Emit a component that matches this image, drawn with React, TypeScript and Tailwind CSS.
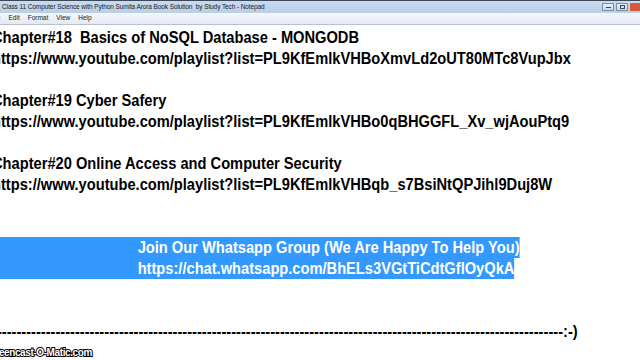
export default function App() {
  return (
    <div className="relative w-[640px] h-[360px] overflow-hidden bg-white" style={{ fontFamily: '"Liberation Sans", Arial, sans-serif' }}>
      {/* title bar */}
      <div className="h-[13px] border-t border-[#3a4a5a] bg-gradient-to-b from-[#c9dbee] to-[#b9cfe6] flex items-center justify-between">
        <div className="text-[6.5px] tracking-[-0.1px] leading-none text-[#1a1a1a] pl-[2px] whitespace-pre">Class 11 Computer Science with Python Sumita Arora Book Solution  by Study Tech - Notepad</div>
        <div className="flex items-center gap-[2px]">
          <div className="w-[12px] h-[8px] border border-[#7a8ea5] bg-gradient-to-b from-[#e6eef7] to-[#c6d4e4] flex items-center justify-center">
            <div className="w-[5px] h-[1px] bg-[#404a55]" />
          </div>
          <div className="w-[12px] h-[8px] border border-[#7a8ea5] bg-gradient-to-b from-[#e6eef7] to-[#c6d4e4] flex items-center justify-center">
            <div className="w-[5px] h-[4px] border border-[#404a55]" />
          </div>
          <div className="w-[10px] h-[8px] bg-[#d8583c] rounded-l-[1px]" />
        </div>
      </div>
      {/* menu bar */}
      <div className="h-[12px] bg-gradient-to-b from-[#f4f7fb] to-[#e4eaf2] border-b border-[#b8c2cc] flex items-center text-[6.5px] leading-none text-[#1a1a1a] ml-[-10px] gap-[8px]">
        <span>File</span>
        <span>Edit</span>
        <span>Format</span>
        <span>View</span>
        <span>Help</span>
      </div>
      {/* text */}
      <div className="pt-[2px] ml-[-8px] origin-top-left scale-x-[0.916] text-[16px] font-bold text-black leading-[21px] whitespace-pre">
        <div>Chapter#18  Basics of NoSQL Database - MONGODB</div>
        <div>https://www.youtube.com/playlist?list=PL9KfEmlkVHBoXmvLd2oUT80MTc8VupJbx</div>
        <div>&nbsp;</div>
        <div>Chapter#19 Cyber Safery</div>
        <div>https://www.youtube.com/playlist?list=PL9KfEmlkVHBo0qBHGGFL_Xv_wjAouPtq9</div>
        <div>&nbsp;</div>
        <div>Chapter#20 Online Access and Computer Security</div>
        <div>https://www.youtube.com/playlist?list=PL9KfEmlkVHBqb_s7BsiNtQPJihl9Duj8W</div>
        <div>&nbsp;</div>
        <div>&nbsp;</div>
        <div><span className="bg-[#3399ff] text-white pl-[159px] inline-block">Join Our Whatsapp Group (We Are Happy To Help You)</span></div>
        <div><span className="bg-[#3399ff] text-white pl-[159px] inline-block">https://chat.whatsapp.com/BhELs3VGtTiCdtGflOyQkA</span></div>
        <div>&nbsp;</div>
        <div>&nbsp;</div>
        <div>{"-".repeat(117)}:-)</div>
      </div>
      <div className="absolute left-[-16px] bottom-[2px] text-[10px] font-bold tracking-[-0.4px] text-white leading-none [-webkit-text-stroke:2px_black] [paint-order:stroke_fill]">Screencast-O-Matic.com</div>
    </div>
  );
}
